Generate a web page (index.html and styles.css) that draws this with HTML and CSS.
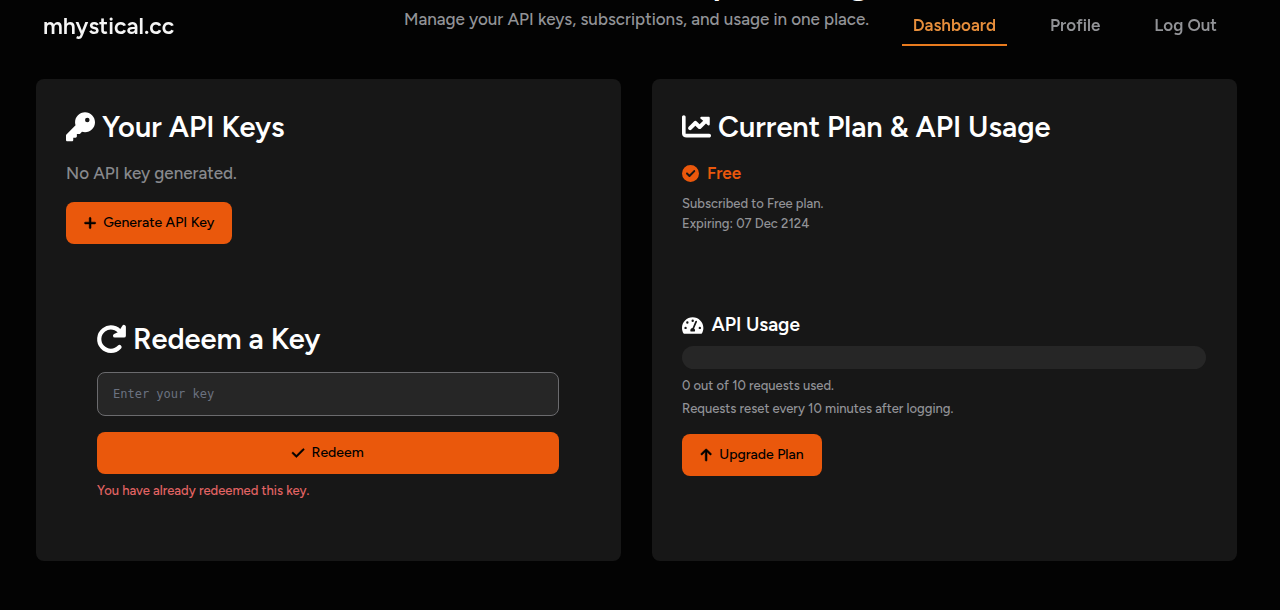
FILE: index.html
```html
<!DOCTYPE html>
<html lang="en">
<head>
    <meta charset="UTF-8">
    <meta name="viewport" content="width=device-width, initial-scale=1.0">
    <title>Dashboard - mhystical.cc</title>
    <link rel="stylesheet" href="styles.css">
</head>
<body>
    <header class="navbar">
        <a href="/" class="logo">mhystical.cc</a>
        <nav class="nav-links">
            <a href="/dashboard" class="active">Dashboard</a>
            <a href="/profile">Profile</a>
            <a href="/logout">Log Out</a>
        </nav>
    </header>

    <main class="page">
        <h1>Welcome to Developer Billing</h1>
        <p class="subtitle">Manage your API keys, subscriptions, and usage in one place.</p>

        <div class="cards">
            <section class="card">
                <h2>
                    <svg class="icon" viewBox="0 0 512 512"><path d="M336 340c97.200 0 176-78.800 176-176S433.200-12 336-12S160 66.800 160 164c0 18.700 2.900 36.800 8.300 53.700L7 379c-4.500 4.500-7 10.600-7 17v80c0 13.300 10.700 24 24 24h80c13.300 0 24-10.700 24-24v-40h40c13.300 0 24-10.700 24-24v-40h40c6.400 0 12.500-2.500 17-7l33.300-33.300c16.900 5.400 35 8.300 53.700 8.300zM376 84a40 40 0 1 1 0 80 40 40 0 1 1 0-80z"/></svg>
                    Your API Keys
                </h2>
                <p class="lead">No API key generated.</p>
                <button type="button" class="btn">
                    <svg class="icon" viewBox="0 0 448 512"><path d="M256 80c0-17.700-14.300-32-32-32s-32 14.300-32 32v144H48c-17.700 0-32 14.300-32 32s14.300 32 32 32h144v144c0 17.700 14.300 32 32 32s32-14.300 32-32V288h144c17.700 0 32-14.300 32-32s-14.300-32-32-32H256V80z"/></svg>
                    Generate API Key
                </button>

                <form class="redeem" action="/redeem" method="POST">
                    <h2>
                        <svg class="icon" viewBox="0 0 512 512"><path d="M420 140A206 206 0 1 0 398 388" fill="none" stroke="currentColor" stroke-width="74" stroke-linecap="round"/><path d="M476 32V188H316L400 150z" stroke="currentColor" stroke-width="68" stroke-linejoin="round"/></svg>
                        Redeem a Key
                    </h2>
                    <input type="text" name="key" class="key-input" placeholder="Enter your key" aria-label="Enter your key">
                    <button type="submit" class="btn btn-full">
                        <svg class="icon" viewBox="0 0 448 512"><path d="M438.600 105.400c12.500 12.500 12.500 32.800 0 45.300l-256 256c-12.500 12.500-32.800 12.500-45.300 0l-128-128c-12.500-12.500-12.500-32.800 0-45.300s32.800-12.500 45.300 0L160 338.700 393.400 105.400c12.500-12.500 32.800-12.500 45.300 0z"/></svg>
                        Redeem
                    </button>
                    <p class="error">You have already redeemed this key.</p>
                </form>
            </section>

            <section class="card">
                <h2>
                    <svg class="icon" viewBox="0 0 512 512"><path d="M64 72c0-17.700-14.300-32-32-32S0 54.300 0 72v288c0 44.200 35.800 72 80 72h400c17.700 0 32-14.300 32-32s-14.300-32-32-32H64zM342 64h126c13 0 22 9 22 22v112c0 20-24 30-38 16l-28-28-88 88c-14 14-36 14-50 0l-50-50-68 68c-14 14-36 14-50 0s-14-36 0-50l93-93c14-14 36-14 50 0l50 50 63-63-44-34c-14-14-8-38 12-38z"/></svg>
                    Current Plan &amp; API Usage
                </h2>
                <p class="plan-name">
                    <svg class="icon" viewBox="0 0 512 512"><path d="M256 512A256 256 0 1 0 256 0a256 256 0 1 0 0 512zM391 205L246 352c-12 12-30 12-42 0l-76-76c-12-12-12-30 0-42s30-12 42 0l55 55L349 163c12-12 30-12 42 0s12 30 0 42z"/></svg>
                    Free
                </p>
                <p class="small">Subscribed to Free plan.</p>
                <p class="small">Expiring: 07 Dec 2124</p>

                <div class="usage">
                    <h3>
                        <svg class="icon" viewBox="0 0 576 512"><path fill-rule="evenodd" d="M288 32C129 32 0 161 0 320c0 52.800 14.300 102.300 39.100 144.800 5.600 9.600 16.300 15.200 27.400 15.200h443c11.100 0 21.800-5.600 27.400-15.200C561.800 422.300 576 372.800 576 320c0-159-129-288-288-288zm0 64a32 32 0 1 1 0 64 32 32 0 1 1 0-64zM144 144a32 32 0 1 1 0 64 32 32 0 1 1 0-64zM96 288a32 32 0 1 1 0 64 32 32 0 1 1 0-64zm384 0a32 32 0 1 1 0 64 32 32 0 1 1 0-64zM391 129c12 6 17 20 12 32l-77 176c16 12 26 31 26 47 0 12-3 23-9 32H233c-6-9-9-20-9-32 0-35 27-62 60-64l75-178c5-12 20-18 32-13z"/></svg>
                        API Usage
                    </h3>
                    <div class="bar"></div>
                    <p class="small">0 out of 10 requests used.</p>
                    <p class="small">Requests reset every 10 minutes after logging.</p>
                    <button type="button" class="btn">
                        <svg class="icon" viewBox="0 0 448 512"><path d="M246.600 41.400c-12.500-12.500-32.800-12.500-45.300 0l-160 160c-12.500 12.500-12.500 32.800 0 45.300s32.800 12.500 45.300 0L192 141.200V448c0 17.700 14.300 32 32 32s32-14.300 32-32V141.200l105.400 105.400c12.500 12.500 32.800 12.500 45.300 0s12.500-32.800 0-45.300l-160-160z"/></svg>
                        Upgrade Plan
                    </button>
                </div>
            </section>
        </div>
    </main>
</body>
</html>
```
FILE: styles.css
```css
* {box-sizing: border-box; margin: 0; padding: 0;}
body {background: #030303; color: #fff; font-family: Figtree, Lato, sans-serif; font-size: 17px; line-height: 28px;}
a {text-decoration: none;}
.icon {height: 1em; fill: currentColor; flex: none; overflow: visible;}

.navbar {position: fixed; top: 0; left: 0; right: 8px; display: flex; justify-content: space-between; align-items: center; padding: 5px 44px 4px 43px; z-index: 10;}
.logo {color: #f5f5f5; font-size: 23px; font-weight: 600;}
.nav-links {display: flex; gap: 32px;}
.nav-links a {color: #929397; font-weight: 600; padding: 6px 11px 5px; border-bottom: 2px solid transparent;}
.nav-links a.active {color: #e88f3c; border-bottom-color: #e97b1e;}

.page {max-width: 1280px; margin: 0 auto; padding: 0 43px 48px 36px;}
/* title sits under the top edge, only its descenders show */
h1 {margin: -38px 0 3px; font-size: 35px; line-height: 40px; font-weight: 600; text-align: center;}
.subtitle {text-align: center; color: #929397; font-weight: 500;}
.cards {display: grid; grid-template-columns: 1fr 1fr; gap: 31px; margin-top: 46px;}
.card {background: #171717; border-radius: 8px; padding: 31px 31px 30px 30px;}

h2 {display: flex; align-items: center; gap: 7px; font-size: 29px; line-height: 34px; font-weight: 600;}
.lead {color: #88898d; margin: 15px 0; font-weight: 500;}

.btn {display: inline-flex; align-items: center; justify-content: center; gap: 7px; padding: 11px 18px; border: none; border-radius: 8px; background: #ea580c; color: #000; font: 500 14px/20px Figtree, Lato, sans-serif; cursor: pointer;}
.btn .icon {stroke: currentColor; stroke-width: 20;}
.btn-full {width: 100%;}

.redeem {margin-top: 47px; padding: 31px 31px 30px;}
.key-input {display: block; width: 100%; height: 44px; margin: 16px 0; padding: 0 15px; background: #262626; border: 1px solid #6b6b6e; border-radius: 8px; color: #fff; font: 12px "DejaVu Sans Mono", monospace;}
.key-input::placeholder {color: #6b7280;}
.error {color: #e36464; margin-top: 7px;}

.plan-name {display: flex; align-items: center; gap: 8px; margin: 15px 0 7px; color: #ea580c; font-weight: 600;}
.small {color: #929397;}
.error, .small {font-size: 13px; line-height: 20px; font-weight: 500;}
.usage {margin-top: 77px;}
h3 {display: flex; align-items: center; gap: 8px; font-size: 19px; line-height: 28px; font-weight: 600;}
.bar {height: 23px; margin: 7px 0; border-radius: 12px; background: #262626;}
.usage .small {margin-bottom: 3px;}
.usage .btn {margin-top: 12px;}
```
